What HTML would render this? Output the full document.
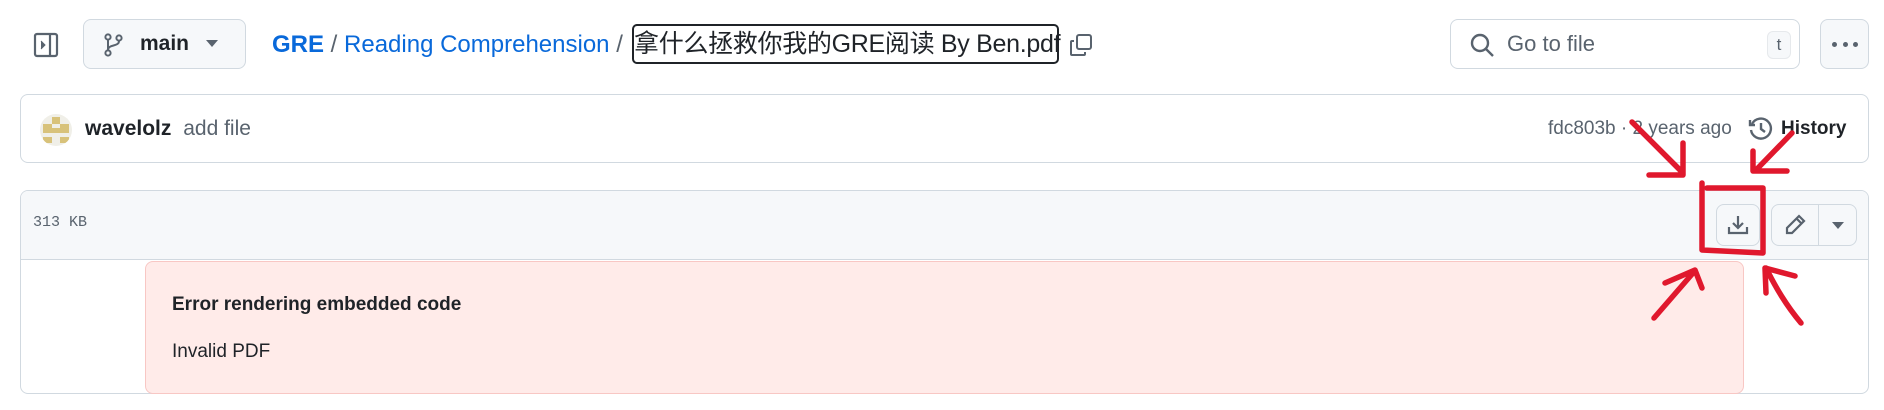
<!DOCTYPE html>
<html><head><meta charset="utf-8"><style>
*{box-sizing:border-box;margin:0;padding:0}
body{width:1884px;height:410px;background:#fff;position:relative;overflow:hidden;font-family:"Liberation Sans","Noto Sans CJK SC",sans-serif;color:#1f2328}
.abs{position:absolute}
.btn{position:absolute;border:1px solid #d1d9e0;border-radius:8px;background:#f6f8fa}
</style></head><body>
<svg class="abs" style="left:33px;top:32px" width="26" height="26" viewBox="0 0 26 26" fill="none" stroke="#59636e" stroke-width="2.2"><rect x="2" y="2" width="22" height="22" rx="2"/><line x1="17" y1="2" x2="17" y2="24"/><path d="M8 9l4 4-4 4" fill="#59636e" stroke-width="1"/></svg>
<div class="btn" style="left:83px;top:19px;width:163px;height:50px"></div>
<svg class="abs" style="left:104px;top:33px" width="20" height="24" viewBox="0 0 20 24" fill="none" stroke="#59636e" stroke-width="2"><circle cx="4" cy="4" r="2.6"/><circle cx="4" cy="20" r="2.6"/><circle cx="15" cy="5" r="2.6"/><line x1="4" y1="7" x2="4" y2="17"/><path d="M15 8c0 6-11 3-11 9"/></svg>
<div class="abs" style="left:140px;top:29px;font-size:21px;font-weight:bold;line-height:30px">main</div>
<svg class="abs" style="left:206px;top:40px" width="12" height="8"><path d="M0 0h12L6 7z" fill="#59636e"/></svg>
<div class="abs" style="left:272px;top:29px;font-size:24px;line-height:32px;color:#59636e;white-space:nowrap"><span style="color:#0969da;font-weight:bold">GRE</span> / <span style="color:#0969da">Reading Comprehension</span> /</div>
<div class="abs" style="left:632px;top:24px;width:427px;height:40px;border:2.5px solid #1f2328;border-radius:5px"></div>
<div class="abs" style="left:634px;top:27px;font-size:25px;line-height:34px;white-space:nowrap;letter-spacing:-0.3px">拿什么拯救你我的GRE阅读 By Ben.pdf</div>
<svg class="abs" style="left:1069px;top:33px" width="24" height="24" viewBox="0 0 24 24" fill="none" stroke="#59636e" stroke-width="2"><rect x="8" y="2" width="14" height="14" rx="2"/><path d="M5 8H3a1 1 0 0 0-1 1v12a1 1 0 0 0 1 1h12a1 1 0 0 0 1-1v-2"/></svg>
<div class="abs" style="left:1450px;top:19px;width:350px;height:50px;border:1px solid #d1d9e0;border-radius:8px"></div>
<svg class="abs" style="left:1469px;top:32px" width="26" height="26" viewBox="0 0 26 26" fill="none" stroke="#59636e" stroke-width="2.4"><circle cx="11" cy="11" r="8"/><line x1="17" y1="17" x2="24" y2="24"/></svg>
<div class="abs" style="left:1507px;top:29px;font-size:22px;line-height:30px;color:#59636e">Go to file</div>
<div class="abs" style="left:1767px;top:31px;width:24px;height:28px;border:1px solid #e6e9ec;border-radius:6px;background:#f6f8fa;font-size:17px;text-align:center;line-height:25px;color:#59636e">t</div>
<div class="btn" style="left:1820px;top:19px;width:49px;height:50px"></div>
<div class="abs" style="left:1832px;top:42px;width:26px;height:6px;display:flex;justify-content:space-between"><i style="width:5px;height:5px;border-radius:50%;background:#59636e"></i><i style="width:5px;height:5px;border-radius:50%;background:#59636e"></i><i style="width:5px;height:5px;border-radius:50%;background:#59636e"></i></div>
<div class="abs" style="left:20px;top:94px;width:1849px;height:69px;border:1px solid #d1d9e0;border-radius:8px"></div>
<div class="abs" style="left:40px;top:114px;width:32px;height:32px;border-radius:50%;background:#f0efe8;overflow:hidden">
<i class="abs" style="left:12px;top:3px;width:8px;height:7px;background:#d8c27a"></i>
<i class="abs" style="left:3px;top:10px;width:9px;height:9px;background:#d8c27a"></i>
<i class="abs" style="left:20px;top:10px;width:9px;height:9px;background:#d8c27a"></i>
<i class="abs" style="left:12px;top:14px;width:8px;height:5px;background:#d8c27a"></i>
<i class="abs" style="left:3px;top:23px;width:9px;height:6px;background:#d8c27a"></i>
<i class="abs" style="left:20px;top:23px;width:9px;height:6px;background:#d8c27a"></i></div>
<div class="abs" style="left:85px;top:114px;font-size:21px;line-height:30px;white-space:nowrap"><b>wavelolz</b> <span style="color:#59636e;margin-left:6px">add file</span></div>
<div class="abs" style="left:1548px;top:114px;font-size:19px;line-height:30px;color:#59636e;white-space:nowrap">fdc803b · 2 years ago</div>
<svg class="abs" style="left:1748px;top:116px" width="26" height="26" viewBox="0 0 26 26" fill="none" stroke="#59636e" stroke-width="2.4"><path d="M4 8A10 10 0 1 1 3 14"/><path d="M2 4v5h5" /><path d="M13 7v6l4 3"/></svg>
<div class="abs" style="left:1781px;top:114px;font-size:19px;font-weight:bold;line-height:30px">History</div>
<div class="abs" style="left:20px;top:190px;width:1849px;height:204px;border:1px solid #d1d9e0;border-radius:8px;overflow:hidden">
<div style="height:69px;background:#f6f8fa;border-bottom:1px solid #d1d9e0"></div></div>
<div class="abs" style="left:33px;top:212px;font-family:'Liberation Mono',monospace;font-size:15px;line-height:22px;color:#59636e">313 KB</div>
<div class="btn" style="left:1716px;top:204px;width:44px;height:42px"></div>
<svg class="abs" style="left:1726px;top:213px" width="24" height="24" viewBox="0 0 24 24" fill="none" stroke="#59636e" stroke-width="2.2"><path d="M3 14v6h18v-6"/><path d="M12 3v12M7 10l5 5 5-5"/></svg>
<div class="btn" style="left:1771px;top:204px;width:86px;height:42px"></div>
<div class="abs" style="left:1818px;top:205px;width:1px;height:40px;background:#d1d9e0"></div>
<svg class="abs" style="left:1783px;top:213px" width="24" height="24" viewBox="0 0 24 24" fill="none" stroke="#59636e" stroke-width="2.2"><path d="M16 3l5 5L9 20H4v-5z"/><path d="M13.5 5.5l5 5"/></svg>
<svg class="abs" style="left:1832px;top:222px" width="12" height="7"><path d="M0 0h12L6 7z" fill="#59636e"/></svg>
<div class="abs" style="left:145px;top:261px;width:1599px;height:133px;background:#ffebe9;border:1px solid #f8c7c4;border-radius:8px"></div>
<div class="abs" style="left:172px;top:292px;font-size:19px;font-weight:bold;line-height:26px">Error rendering embedded code</div>
<div class="abs" style="left:172px;top:339px;font-size:19px;line-height:26px">Invalid PDF</div>
<svg class="abs" style="left:0;top:0" width="1884" height="410" fill="none" stroke="#e0182d" stroke-width="5.5" stroke-linecap="round" stroke-linejoin="round">
<path d="M1702 183L1702 250L1763 253L1763 188L1707 188"/>
<path d="M1632 122L1682 172M1683 143L1683 175L1649 175"/>
<path d="M1792 133L1756 170M1753 151L1753 171L1787 171"/>
<path d="M1654 318L1693 273M1665 283L1695 270L1702 288"/>
<path d="M1801 323C1786 305 1776 288 1766 268M1766 293L1765 268L1795 276"/>
</svg>
</body></html>
